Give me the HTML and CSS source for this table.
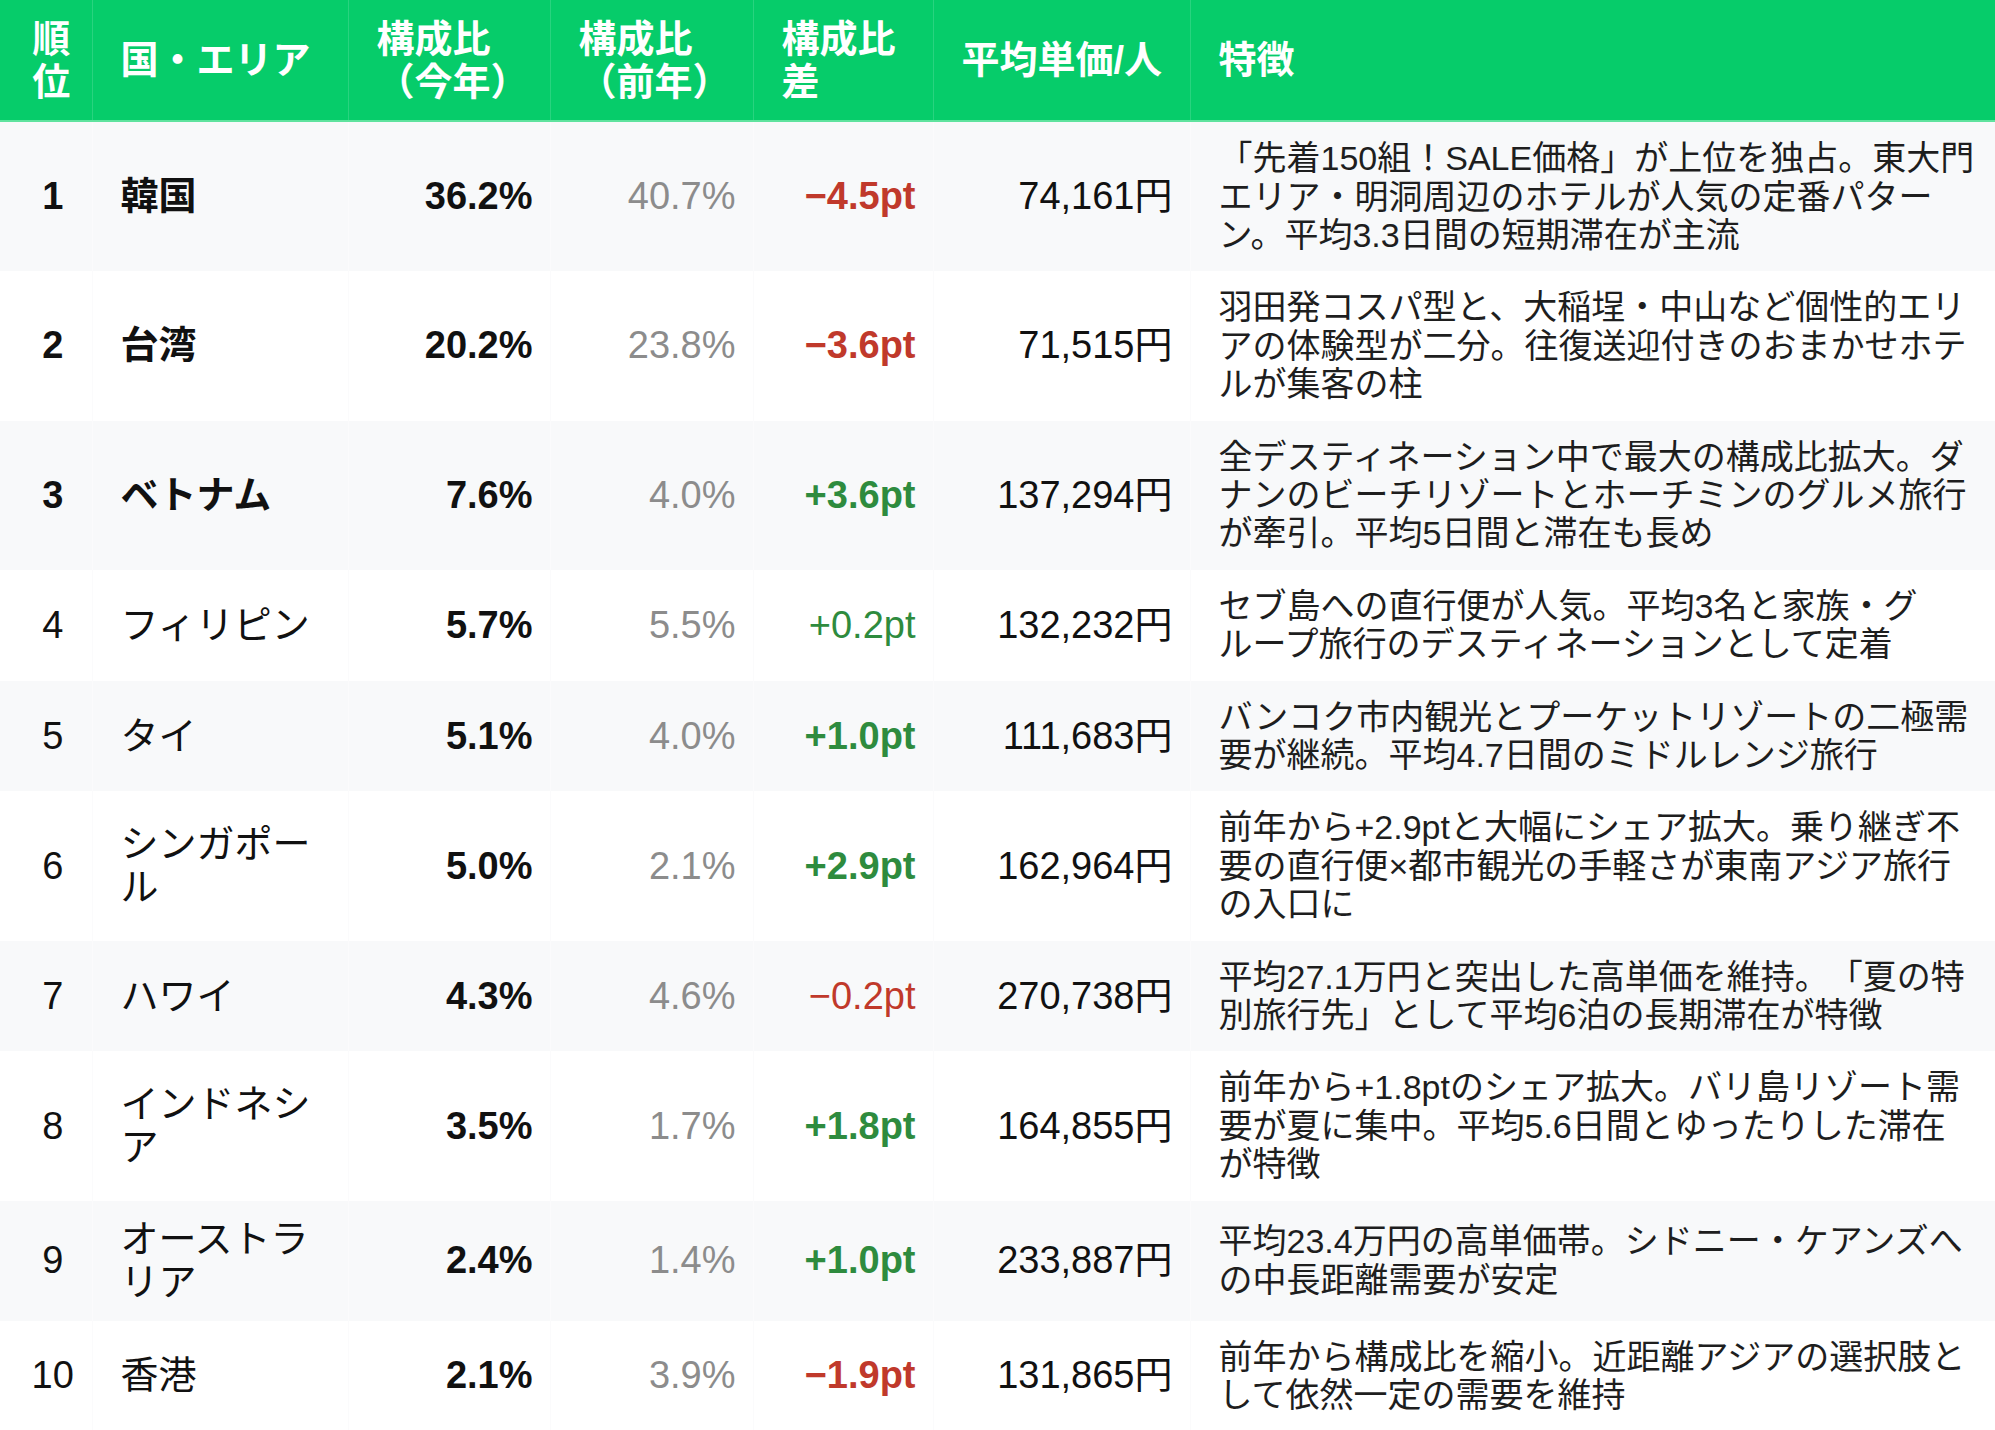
FILE: index.html
```html
<!DOCTYPE html>
<html lang="ja">
<head>
<meta charset="utf-8">
<title>国・エリア別構成比</title>
<link rel="stylesheet" href="styles.css">
</head>
<body>
<table class="rank-table">
  <colgroup>
    <col class="c-rank"><col class="c-country"><col class="c-now"><col class="c-prev"><col class="c-diff"><col class="c-price"><col class="c-note">
  </colgroup>
  <thead>
    <tr>
      <th class="rank">順位</th>
      <th>国・エリア</th>
      <th>構成比（今年）</th>
      <th>構成比（前年）</th>
      <th>構成比差</th>
      <th>平均単価/人</th>
      <th>特徴</th>
    </tr>
  </thead>
  <tbody>
    <tr class="odd">
      <td class="rank strong">1</td>
      <td class="country strong">韓国</td>
      <td class="num now">36.2%</td>
      <td class="num prev">40.7%</td>
      <td class="num down strong">−4.5pt</td>
      <td class="num price">74,161円</td>
      <td class="note">「先着150組！SALE価格」が上位を独占。東大門エリア・明洞周辺のホテルが人気の定番パターン。平均3.3日間の短期滞在が主流</td>
    </tr>
    <tr>
      <td class="rank strong">2</td>
      <td class="country strong">台湾</td>
      <td class="num now">20.2%</td>
      <td class="num prev">23.8%</td>
      <td class="num down strong">−3.6pt</td>
      <td class="num price">71,515円</td>
      <td class="note">羽田発コスパ型と、大稲埕・中山など個性的エリアの体験型が二分。往復送迎付きのおまかせホテルが集客の柱</td>
    </tr>
    <tr class="odd">
      <td class="rank strong">3</td>
      <td class="country strong">ベトナム</td>
      <td class="num now">7.6%</td>
      <td class="num prev">4.0%</td>
      <td class="num up strong">+3.6pt</td>
      <td class="num price">137,294円</td>
      <td class="note">全デスティネーション中で最大の構成比拡大。ダナンのビーチリゾートとホーチミンのグルメ旅行が牽引。平均5日間と滞在も長め</td>
    </tr>
    <tr>
      <td class="rank">4</td>
      <td class="country">フィリピン</td>
      <td class="num now">5.7%</td>
      <td class="num prev">5.5%</td>
      <td class="num up">+0.2pt</td>
      <td class="num price">132,232円</td>
      <td class="note">セブ島への直行便が人気。平均3名と家族・グループ旅行のデスティネーションとして定着</td>
    </tr>
    <tr class="odd">
      <td class="rank">5</td>
      <td class="country">タイ</td>
      <td class="num now">5.1%</td>
      <td class="num prev">4.0%</td>
      <td class="num up strong">+1.0pt</td>
      <td class="num price">111,683円</td>
      <td class="note">バンコク市内観光とプーケットリゾートの二極需要が継続。平均4.7日間のミドルレンジ旅行</td>
    </tr>
    <tr>
      <td class="rank">6</td>
      <td class="country">シンガポール</td>
      <td class="num now">5.0%</td>
      <td class="num prev">2.1%</td>
      <td class="num up strong">+2.9pt</td>
      <td class="num price">162,964円</td>
      <td class="note">前年から+2.9ptと大幅にシェア拡大。乗り継ぎ不要の直行便×都市観光の手軽さが東南アジア旅行の入口に</td>
    </tr>
    <tr class="odd">
      <td class="rank">7</td>
      <td class="country">ハワイ</td>
      <td class="num now">4.3%</td>
      <td class="num prev">4.6%</td>
      <td class="num down">−0.2pt</td>
      <td class="num price">270,738円</td>
      <td class="note">平均27.1万円と突出した高単価を維持。「夏の特別旅行先」として平均6泊の長期滞在が特徴</td>
    </tr>
    <tr>
      <td class="rank">8</td>
      <td class="country">インドネシア</td>
      <td class="num now">3.5%</td>
      <td class="num prev">1.7%</td>
      <td class="num up strong">+1.8pt</td>
      <td class="num price">164,855円</td>
      <td class="note">前年から+1.8ptのシェア拡大。バリ島リゾート需要が夏に集中。平均5.6日間とゆったりした滞在が特徴</td>
    </tr>
    <tr class="odd">
      <td class="rank">9</td>
      <td class="country">オーストラリア</td>
      <td class="num now">2.4%</td>
      <td class="num prev">1.4%</td>
      <td class="num up strong">+1.0pt</td>
      <td class="num price">233,887円</td>
      <td class="note">平均23.4万円の高単価帯。シドニー・ケアンズへの中長距離需要が安定</td>
    </tr>
    <tr>
      <td class="rank">10</td>
      <td class="country">香港</td>
      <td class="num now">2.1%</td>
      <td class="num prev">3.9%</td>
      <td class="num down strong">−1.9pt</td>
      <td class="num price">131,865円</td>
      <td class="note">前年から構成比を縮小。近距離アジアの選択肢として依然一定の需要を維持</td>
    </tr>
  </tbody>
</table>
</body>
</html>
```

FILE: styles.css
```css
html, body {
  margin: 0;
  padding: 0;
  background: #ffffff;
}

body {
  font-family: "Liberation Sans", "Noto Sans CJK JP", sans-serif;
  color: #111111;
  text-spacing-trim: space-all;
}

.rank-table {
  width: 1995px;
  table-layout: fixed;
  border-collapse: collapse;
  border-spacing: 0;
}

.c-rank { width: 92px; }
.c-country { width: 256px; }
.c-now { width: 202px; }
.c-prev { width: 203px; }
.c-diff { width: 180px; }
.c-price { width: 257px; }
.c-note { width: 805px; }

.rank-table th {
  background: #06cc6a;
  color: #ffffff;
  font-size: 38px;
  font-weight: 700;
  line-height: 1.12;
  text-align: left;
  vertical-align: middle;
  padding: 18px 17px 17px 28px;
  border-right: 1px solid rgba(255, 255, 255, 0.14);
  border-bottom: 2px solid #5fe39e;
}

.rank-table th:last-child {
  border-right: none;
}

.rank-table td {
  font-size: 38px;
  line-height: 1.13;
  vertical-align: middle;
  padding: 17px 17px 17px 28px;
  border-right: 1px solid #fbfbfc;
}

.rank-table td:last-child {
  border-right: none;
}

.rank-table tr.odd td {
  background: #f8f9fa;
}

.rank-table th.rank {
  text-align: center;
  padding-left: 28px;
}

.rank-table td.rank {
  text-align: center;
  padding-left: 31px;
}

.rank-table td.num {
  text-align: right;
}

.rank-table td.strong {
  font-weight: 700;
}

.rank-table td.now {
  font-weight: 700;
  color: #111111;
}

.rank-table td.prev {
  color: #8c8c8c;
}

.rank-table td.down {
  color: #c0392b;
}

.rank-table td.up {
  color: #2e8b3e;
}

.rank-table td.price {
  color: #111111;
}

.rank-table td.note {
  font-size: 34px;
  line-height: 1.13;
  color: #1e1e1e;
  line-break: strict;
}
```
